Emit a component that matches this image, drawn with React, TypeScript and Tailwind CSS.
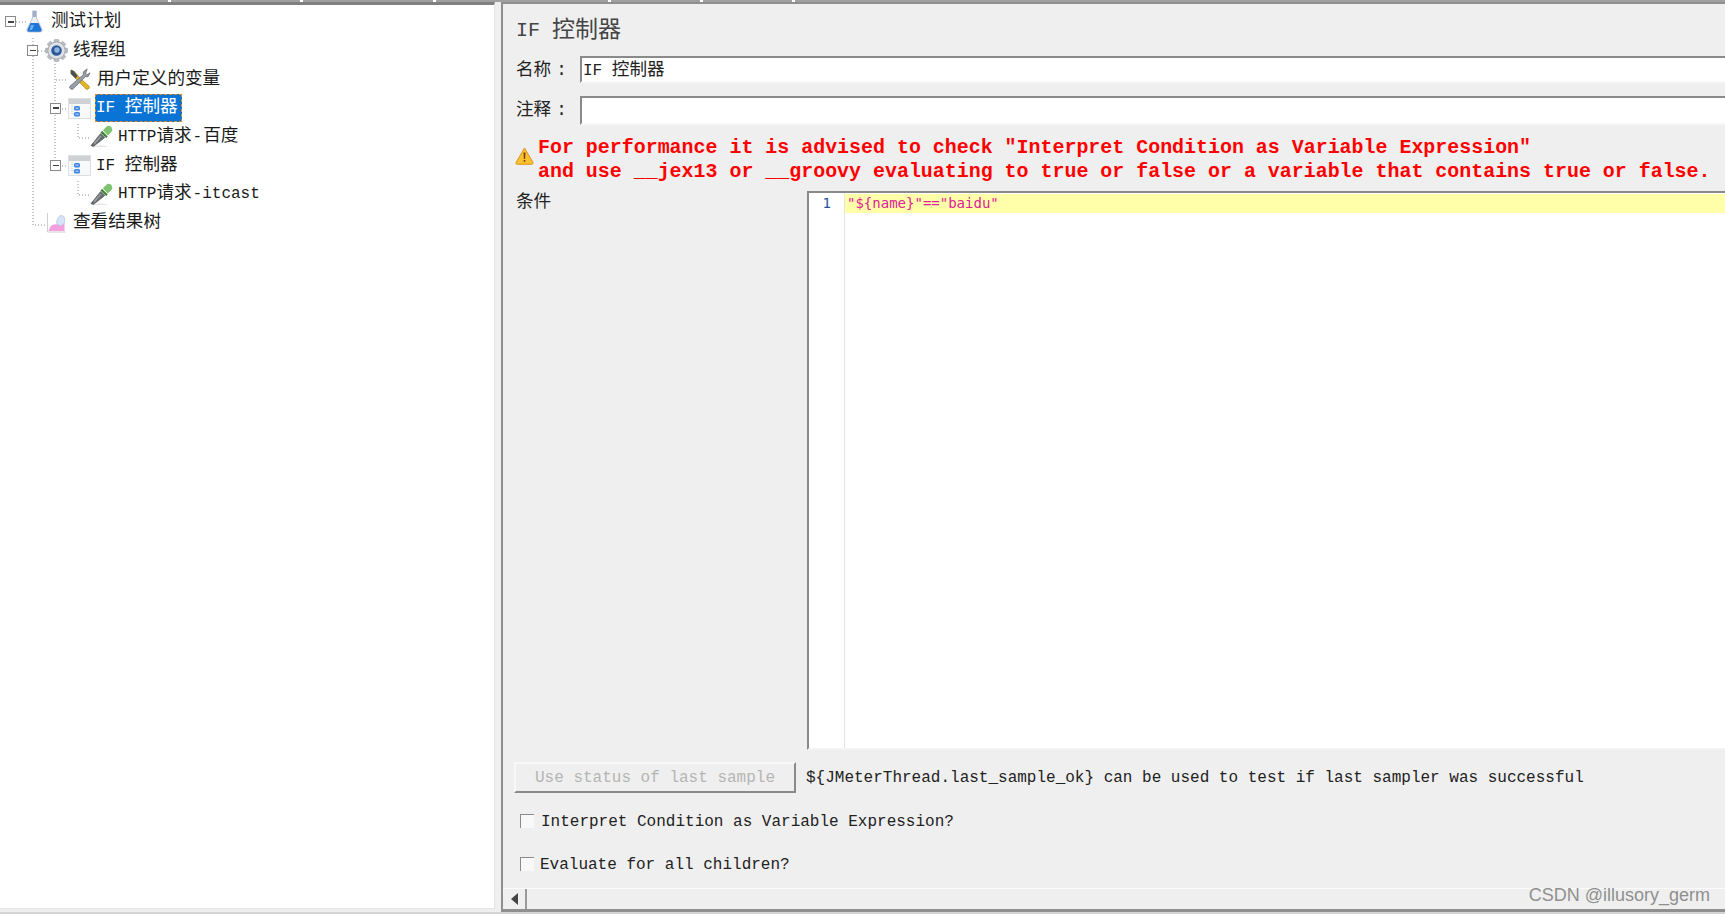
import type { ReactNode } from "react";

const MONO = "font-['Liberation_Mono','Noto_Sans_CJK_SC',monospace]";

// CJK glyphs run a bit wider than the latin ones in the shot
function Cjk({ children, className = "text-[17.6px]" }: { children: ReactNode; className?: string }) {
    return <span className={className}>{children}</span>;
}

function Handle() {
    return (
        <span className="w-[11px] h-[11px] border border-[#8a8a8a] bg-white flex items-center justify-center shrink-0">
            <span className="w-[6px] h-[1.5px] bg-[#444]"></span>
        </span>
    );
}

function FlaskIcon() {
    return (
        <svg width="17" height="23" viewBox="0 0 17 23">
            <path d="M6.500 1h4v7l5.500 11q.8 3-2 3H3q-2.800 0-2-3L6.500 8z" fill="#e9edf4" stroke="#b4bccb" strokeWidth=".8" />
            <path d="M7 1h3v6H7z" fill="#9fb0c8" />
            <path d="M4.500 13h8l3 6.500q.4 2.200-1.600 2.200H3q-2 0-1.500-2.200z" fill="#1f74d6" />
            <path d="M5 15h3l-2 5H3.500z" fill="#6fb0f0" />
        </svg>
    );
}

function GearIcon() {
    const teeth = [0, 45, 90, 135, 180, 225, 270, 315];
    return (
        <svg width="23" height="23" viewBox="0 0 24 24">
            {teeth.map((a) => (
                <rect key={a} x="9.500" y="0.500" width="5" height="6" rx="1" fill="#b9bdc4" stroke="#9da1a9" strokeWidth=".6" transform={`rotate(${a} 12 12)`} />
            ))}
            <circle cx="12" cy="12" r="9" fill="#dfe1e6" stroke="#a3a7ae" />
            <circle cx="12" cy="12" r="5.500" fill="#2c5a98" />
            <circle cx="12.500" cy="11.500" r="2.800" fill="#8fb3e0" />
        </svg>
    );
}

function WrenchIcon() {
    return (
        <svg width="23" height="23" viewBox="0 0 24 24">
            <path d="M3 2l3 1 6 7 10 9q1 2-1 3t-3-1L9 12 3 6z" fill="#e6b422" stroke="#8f7414" strokeWidth=".6" />
            <path d="M3 2l3 1 4 5-2 3-5-5z" fill="#4a4f55" />
            <path d="M20 1l-4 3v3L2 19q-1 2 1 3t3-1L18 9h3l2-4-3 2-1.500-1.500z" fill="#9aa0a8" stroke="#565b62" strokeWidth=".7" />
        </svg>
    );
}

function IfIcon() {
    return (
        <svg width="23" height="21" viewBox="0 0 23 21">
            <rect x=".5" y=".5" width="22" height="20" fill="#f8f9fa" stroke="#dcdee1" />
            <rect x="1" y="1" width="21" height="5" fill="#cfd1d4" />
            <path d="M4 7v9h2" fill="none" stroke="#bbb" strokeWidth=".8" strokeDasharray="1 1" />
            <rect x="6" y="8" width="6" height="4.500" rx="1.500" fill="#3f86e4" />
            <rect x="6" y="14" width="6" height="4.500" rx="1.500" fill="#3f86e4" />
            <path d="M7.500 10.200h3M7.500 16.200h3" stroke="#dbe9fb" strokeWidth=".9" />
        </svg>
    );
}

function DropperIcon() {
    return (
        <svg width="23" height="23" viewBox="0 0 24 24">
            <path d="M2 23q9-3 17 0z" fill="#e4e4e4" />
            <path d="M1 21.500L11 9l4.500 4L3.500 22.500z" fill="#6a6e73" stroke="#3c3f43" strokeWidth=".6" />
            <path d="M3.500 19L11 11l1 1-7 8z" fill="#9a9ea3" />
            <path d="M11 8l6 5.500 1.500-1.500-6-6z" fill="#3f7f3a" />
            <path d="M13.500 5.500L18 1q3-1 4.500 1.500t0 4.500L18.500 11z" fill="#7ec36e" />
        </svg>
    );
}

function ChartIcon() {
    return (
        <svg width="20" height="21" viewBox="0 0 20 21">
            <path d="M1.500 1v19h18" fill="none" stroke="#cfcfcf" />
            <path d="M2.500 19q2-7 6-6.500t4-3 6 1.500v8z" fill="#f3a0dd" />
            <path d="M10.500 11q1-7.500 5-7.500t3 7q-2 3.500-5 3.500z" fill="#d5e4f6" stroke="#a7bbd3" strokeWidth=".6" />
        </svg>
    );
}

function WarnIcon() {
    return (
        <svg width="19" height="18" viewBox="0 0 19 18">
            <path d="M9.500 1l8.500 14.500q.3 1.800-1.200 1.800H2.200q-1.500 0-1.200-1.800z" fill="#f9c12e" stroke="#dc9420" />
            <path d="M8.500 5.500h2l-.4 6.500H8.900zM8.700 13h1.600v1.800H8.700z" fill="#7a3d10" />
        </svg>
    );
}

// dotted connectors sit underneath the tree rows
function TreeLines() {
    return (
        <svg className="absolute left-0 top-0" width="200" height="240">
            <g fill="none" stroke="#8c8c8c" strokeDasharray="1 2">
                <path d="M16 17h10" />
                <path d="M33 33v187h12" />
                <path d="M38 46h7" />
                <path d="M55 59v102" />
                <path d="M56 75h12" />
                <path d="M62 104h6M62 161h6" />
                <path d="M78 119v14h12M78 176v14h12" />
            </g>
        </svg>
    );
}

function Row({ pad, children }: { pad: string; children: ReactNode }) {
    return <div className={`relative flex items-center h-[28.7px] ${pad}`}>{children}</div>;
}

function Tree() {
    return (
        <div className={`relative w-[495px] shrink-0 bg-white border-t-[3px] border-t-[#808080] border-r border-r-[#e4e4e4] border-b border-b-[#e4e4e4] mb-[3px] pt-[2.600px] text-[16px] leading-none text-[#1a1a1a] ${MONO}`}>
            <TreeLines />
            <Row pad="pl-[5px]">
                <Handle />
                <span className="ml-[10px] w-[25px] shrink-0"><FlaskIcon /></span>
                <Cjk>测试计划</Cjk>
            </Row>
            <Row pad="pl-[27px]">
                <Handle />
                <span className="ml-[7px] w-[28px] shrink-0"><GearIcon /></span>
                <Cjk>线程组</Cjk>
            </Row>
            <Row pad="pl-[68px]">
                <span className="w-[29px] shrink-0"><WrenchIcon /></span>
                <Cjk>用户定义的变量</Cjk>
            </Row>
            <Row pad="pl-[50px]">
                <Handle />
                <span className="ml-[7px] w-[27px] shrink-0"><IfIcon /></span>
                <span className="h-[28px] flex items-center pl-[1px] pr-[4px] bg-[#0a74d6] text-white outline-1 outline-dashed outline-[#e08a2c] -outline-offset-1 whitespace-pre">
                    IF <Cjk>控制器</Cjk>
                </span>
            </Row>
            <Row pad="pl-[90px]">
                <span className="w-[28px] shrink-0"><DropperIcon /></span>
                HTTP<Cjk>请求</Cjk><span className="mx-[1px]">-</span><Cjk>百度</Cjk>
            </Row>
            <Row pad="pl-[50px]">
                <Handle />
                <span className="ml-[7px] w-[28px] shrink-0"><IfIcon /></span>
                <span className="whitespace-pre">IF <Cjk>控制器</Cjk></span>
            </Row>
            <Row pad="pl-[90px]">
                <span className="w-[28px] shrink-0"><DropperIcon /></span>
                HTTP<Cjk>请求</Cjk><span className="ml-[1px]">-itcast</span>
            </Row>
            <Row pad="pl-[46px]">
                <span className="w-[27px] shrink-0"><ChartIcon /></span>
                <Cjk>查看结果树</Cjk>
            </Row>
        </div>
    );
}

function Field({ label, value, rowClass, labelClass }: { label: string; value?: ReactNode; rowClass: string; labelClass: string }) {
    return (
        <div className={`flex items-center ${rowClass}`}>
            <span className={`w-[64px] shrink-0 text-[17.6px] text-[#222] ${labelClass}`}>
                {label}
                <span className="ml-[5px]">:</span>
            </span>
            <div className="flex-1 h-full flex items-center pl-[1px] pt-[2px] bg-white border-t-[2px] border-l-[2px] border-t-[#8a8a8a] border-l-[#8a8a8a] border-b-[2px] border-b-[#f8f8f8] text-[16px] text-[#222] whitespace-pre">
                {value}
            </div>
        </div>
    );
}

function Check({ label, gap }: { label: string; gap: string }) {
    return (
        <div className="flex items-center h-[16px] pl-[4px]">
            <span className="w-[14px] h-[14px] -mt-[3px] bg-[#f8f8f8] border-t border-l border-t-[#8a8a8a] border-l-[#8a8a8a] shrink-0"></span>
            <span className={`${gap} text-[16px] text-[#222]`}>{label}</span>
        </div>
    );
}

function Editor() {
    return (
        <div className="flex-1 flex items-start">
            <span className="w-[291px] shrink-0 text-[17.6px] text-[#222] mt-[-2px]">条件</span>
            <div className="flex-1 h-full flex bg-white border-t-[2px] border-l-[2px] border-t-[#8a8a8a] border-l-[#8a8a8a] border-b-[2px] border-b-[#f4f4f4]">
                <div className="w-[36px] shrink-0 border-r border-r-[#e4e4e4] pr-[13px] text-right text-[14px] leading-[20px] font-['DejaVu_Sans_Mono',monospace] text-[#2a4f9e]">
                    1
                </div>
                <div className="flex-1">
                    <div className="h-[19px] mt-[1px] bg-[#ffffaa] pl-[2px] flex items-center text-[14px] font-['DejaVu_Sans_Mono',monospace] text-[#e0209a]">
                        "{"${name}"}"=="baidu"
                    </div>
                </div>
            </div>
        </div>
    );
}

function Detail() {
    return (
        <div className={`relative flex-1 min-w-0 flex flex-col bg-[#efefef] border-t-[2px] border-t-[#8f8f8f] border-l-[2px] border-l-[#8f8f8f] border-b-[3px] border-b-[#8f8f8f] ${MONO}`}>
            <div className="h-[40px] pl-[13px] pt-[14px] flex items-center text-[20px] text-[#444] whitespace-pre">
                IF <Cjk className="text-[23px]">控制器</Cjk>
            </div>
            <div className="pl-[13px] flex flex-col">
                <Field
                    label="名称"
                    labelClass="pt-[2px]"
                    rowClass="h-[27px] mt-[12px]"
                    value={<>IF <Cjk>控制器</Cjk></>}
                />
                <Field label="注释" labelClass="pt-0" rowClass="h-[29px] mt-[13px]" />
                <div className="flex items-center mt-[10px] h-[48px]">
                    <span className="w-[23px] -ml-[1px] -mt-[6px] shrink-0"><WarnIcon /></span>
                    <p className="pt-[2px] text-[19.950px] leading-[24px] font-bold text-[#ff0000] whitespace-nowrap">
                        For performance it is advised to check "Interpret Condition as Variable Expression"
                        <br />
                        and use __jex13 or __groovy evaluating to true or false or a variable that contains true or false.
                    </p>
                </div>
            </div>
            <div className="pl-[13px] h-[559px] mt-[8px] flex">
                <Editor />
            </div>
            <div className="flex items-center pl-[11px] mt-[12px] h-[31px]">
                <button className="w-[282px] h-full shrink-0 bg-[#efefef] border-t-[2px] border-l-[2px] border-t-[#f8f8f8] border-l-[#f8f8f8] border-b-[2px] border-r-[2px] border-b-[#8a8a8a] border-r-[#8a8a8a] text-[16px] text-[#b5b5b5]">
                    Use status of last sample
                </button>
                <span className="ml-[10px] text-[16px] text-[#222]">
                    {"${JMeterThread.last_sample_ok}"} can be used to test if last sampler was successful
                </span>
            </div>
            <div className="pl-[13px] mt-[21px]">
                <Check label="Interpret Condition as Variable Expression?" gap="ml-[7px]" />
            </div>
            <div className="pl-[13px] mt-[27px]">
                <Check label="Evaluate for all children?" gap="ml-[6px]" />
            </div>
            {/* horizontal scrollbar */}
            <div className="mt-auto h-[21px] flex border-t border-t-[#fbfbfb]">
                <div className="w-[24px] flex items-center justify-center border-r-[2px] border-r-[#9a9a9a]">
                    <span className="w-0 h-0 border-y-[6px] border-y-transparent border-r-[7px] border-r-[#444]"></span>
                </div>
            </div>
            <span className="absolute right-[15px] bottom-[5px] text-[18px] leading-none font-['Liberation_Sans',sans-serif] text-[#8f8f8f]">
                CSDN @illusory_germ
            </span>
        </div>
    );
}

export default function App() {
    return (
        <div className="w-[1725px] h-[914px] flex flex-col overflow-hidden bg-[#efefef]">
            {/* cut-off tab strip at the very top */}
            <div className="h-[2px] shrink-0 flex gap-[3px] bg-white">
                <div className="w-[168px] bg-[#a0a0a0]"></div>
                <div className="w-[129px] bg-[#a0a0a0]"></div>
                <div className="w-[130px] bg-[#a0a0a0]"></div>
                <div className="w-[172px] bg-[#a0a0a0]"></div>
                <div className="w-[89px] bg-[#a0a0a0]"></div>
                <div className="w-[89px] bg-[#a0a0a0]"></div>
                <div className="flex-1 bg-[#a0a0a0]"></div>
            </div>
            <div className="flex-1 min-h-0 flex">
                <Tree />
                <div className="w-[6px] shrink-0"></div>
                <Detail />
            </div>
            <div className="h-[2px] shrink-0 bg-[#d4d4d4]"></div>
        </div>
    );
}
